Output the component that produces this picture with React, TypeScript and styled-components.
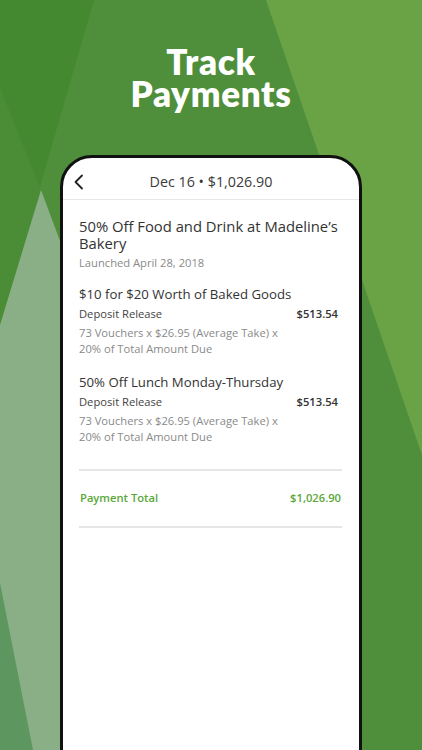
import styled, { createGlobalStyle } from "styled-components";

const GlobalStyle = createGlobalStyle`
  html, body {
    margin: 0;
    padding: 0;
  }
  body {
    font-family: "Open Sans", "Liberation Sans", sans-serif;
  }
`;

type Deal = {
  name: string;
  amount: string;
};

const deals: Deal[] = [
  { name: "$10 for $20 Worth of Baked Goods", amount: "$513.54" },
  { name: "50% Off Lunch Monday-Thursday", amount: "$513.54" },
];

function Backdrop() {
  return (
    <BackdropSvg viewBox="0 0 422 750" preserveAspectRatio="none">
      <rect x="0" y="0" width="422" height="750" fill="#4f8f3b" />
      <polygon points="266,0 422,0 422,455" fill="#6aa345" />
      <polygon points="0,0 94,0 0,325" fill="#44892f" />
      <polygon points="0,88 41,190 0,325" fill="#4a8d36" />
      <polygon points="41,190 0,325 0,750 250,750" fill="#8aaf86" />
      <polygon points="0,583 33,750 0,750" fill="#5e9660" />
    </BackdropSvg>
  );
}

function App() {
  return (
    <>
      <GlobalStyle />
      <Page>
        <Backdrop />
        <Headline>
          <HeadLine>Track</HeadLine>
          <HeadLine>Payments</HeadLine>
        </Headline>
        <Phone>
          <TopBar>
            <BackButton aria-label="Back">
              <svg width="12" height="16" viewBox="0 0 12 16">
                <path d="M9 1.5 L2.5 8 L9 14.5" fill="none" stroke="#222" strokeWidth="1.8" strokeLinecap="round" strokeLinejoin="round" />
              </svg>
            </BackButton>
            <TopTitle>Dec 16 • $1,026.90</TopTitle>
          </TopBar>
          <Body>
            <CampaignTitle>50% Off Food and Drink at Madeline’s Bakery</CampaignTitle>
            <Launched>Launched April 28, 2018</Launched>
            {deals.map((deal) => (
              <DealBlock key={deal.name}>
                <DealName>{deal.name}</DealName>
                <DealRow>
                  <span>Deposit Release</span>
                  <Amount>{deal.amount}</Amount>
                </DealRow>
                <Formula>73 Vouchers x $26.95 (Average Take) x 20% of Total Amount Due</Formula>
              </DealBlock>
            ))}
            <TotalRow>
              <span>Payment Total</span>
              <span>$1,026.90</span>
            </TotalRow>
          </Body>
        </Phone>
      </Page>
    </>
  );
}

const Page = styled.div`
  position: relative;
  width: 422px;
  height: 750px;
  overflow: hidden;
  display: flex;
  flex-direction: column;
`;

const BackdropSvg = styled.svg`
  position: absolute;
  inset: 0;
  width: 100%;
  height: 100%;
  z-index: 0;
`;

const Headline = styled.h1`
  position: relative;
  z-index: 1;
  margin: 45px 0 0;
  display: flex;
  flex-direction: column;
  align-items: center;
  color: #ffffff;
  font-family: Lato, "Liberation Sans", sans-serif;
  font-weight: 800;
  font-size: 35px;
  letter-spacing: 0.7px;
`;

const HeadLine = styled.span`
  display: block;
  height: 32px;
  line-height: 32px;
`;

const Phone = styled.div`
  position: relative;
  z-index: 1;
  margin: 46px 0 0 60px;
  width: 302px;
  height: 640px;
  box-sizing: border-box;
  background: #ffffff;
  border: 3px solid #111111;
  border-radius: 32px 32px 0 0;
  flex-shrink: 0;
`;

const TopBar = styled.div`
  position: relative;
  height: 41px;
  display: flex;
  align-items: center;
  justify-content: center;
  border-bottom: 1.5px solid #e8e8e8;
`;

const BackButton = styled.div`
  position: absolute;
  left: 10px;
  top: 16px;
  display: flex;
`;

const TopTitle = styled.div`
  color: #3a3a3a;
  font-size: 14.3px;
  margin-top: 5px;
`;

const Body = styled.div`
  display: flex;
  flex-direction: column;
  padding: 18px 17px 0 16px;
  color: #333333;
`;

const CampaignTitle = styled.div`
  margin-right: -14px;
  font-size: 14.8px;
  font-weight: 500;
  line-height: 17px;
`;

const Launched = styled.div`
  margin-top: 3px;
  font-size: 11.2px;
  line-height: 16px;
  color: #8a8a8a;
`;

const DealBlock = styled.div`
  display: flex;
  flex-direction: column;
  margin-top: 15px;
  & + & {
    margin-top: 17px;
  }
`;

const DealName = styled.div`
  font-size: 13.2px;
  font-weight: 500;
  line-height: 17px;
`;

const DealRow = styled.div`
  display: flex;
  justify-content: space-between;
  margin-top: 3px;
  padding-right: 4px;
  font-size: 11.2px;
  line-height: 16px;
  color: #444444;
`;

const Amount = styled.span`
  font-weight: 600;
  color: #333333;
`;

const Formula = styled.div`
  margin-top: 3px;
  max-width: 202px;
  font-size: 11.2px;
  line-height: 16px;
  color: #8a8a8a;
`;

const TotalRow = styled.div`
  display: flex;
  justify-content: space-between;
  margin-top: 24px;
  padding: 19px 1px 20px 1px;
  border-top: 2px solid #e6e6e6;
  border-bottom: 2px solid #e6e6e6;
  color: #5aa83a;
  font-size: 11.2px;
  font-weight: 600;
  line-height: 16px;
`;

export default App;
